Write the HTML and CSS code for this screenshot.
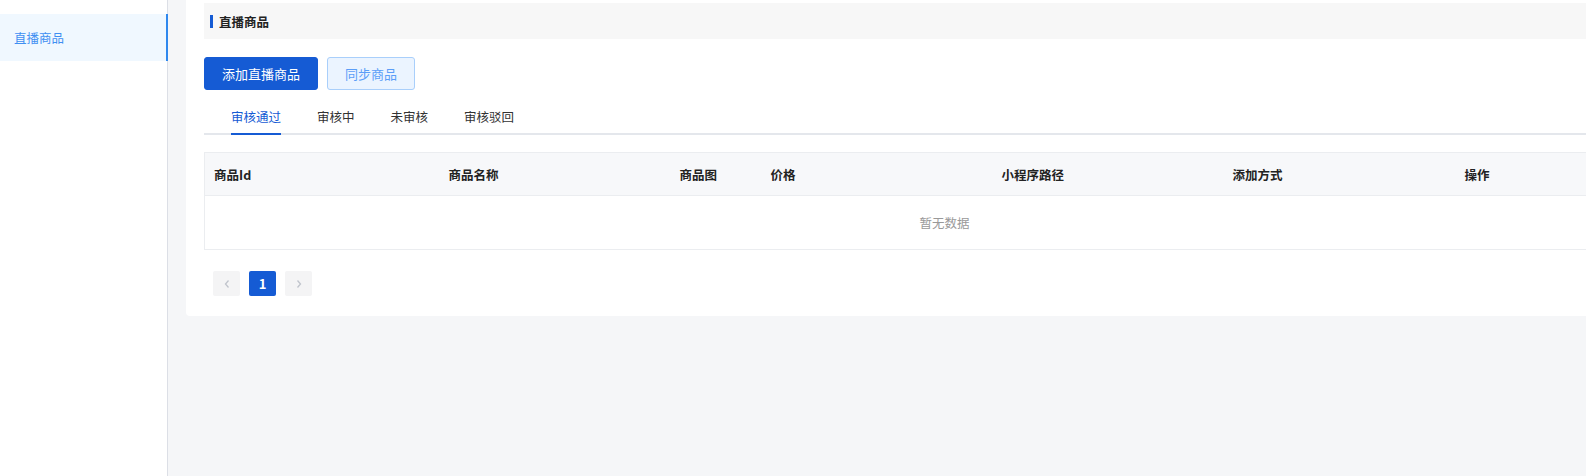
FILE: index.html
```html
<!DOCTYPE html>
<html lang="zh-CN">
  <head>
    <meta charset="UTF-8" />
    <meta name="viewport" content="width=device-width, initial-scale=1.0" />
    <title>直播商品</title>
    <link rel="stylesheet" href="styles.css">
  </head>
  <body>
    <div class="layout">
      <div class="sidebar">
        <ul class="menu">
          <li class="menu-item active">直播商品</li>
        </ul>
      </div>

      <div class="main">
        <div class="card">
          <div class="card-title">
            <span class="title-mark"></span>
            <span>直播商品</span>
          </div>

          <div class="toolbar">
            <button class="btn btn-primary">添加直播商品</button>
            <button class="btn btn-plain">同步商品</button>
          </div>

          <div class="tabs">
            <div class="tab active">审核通过</div>
            <div class="tab">审核中</div>
            <div class="tab">未审核</div>
            <div class="tab">审核驳回</div>
          </div>

          <table class="goods-table">
            <colgroup>
              <col style="width: 235px" />
              <col style="width: 231px" />
              <col style="width: 91px" />
              <col style="width: 231px" />
              <col style="width: 231px" />
              <col style="width: 232px" />
              <col style="width: 229px" />
            </colgroup>
            <thead>
              <tr>
                <th>商品Id</th>
                <th>商品名称</th>
                <th>商品图</th>
                <th>价格</th>
                <th>小程序路径</th>
                <th>添加方式</th>
                <th>操作</th>
              </tr>
            </thead>
            <tbody>
              <tr>
                <td class="empty" colspan="7">暂无数据</td>
              </tr>
            </tbody>
          </table>

          <div class="pager">
            <button class="page-btn page-arrow">
              <svg width="8" height="10" viewBox="0 0 8 10"><path d="M5.5 1.5 L2.5 5 L5.5 8.5" /></svg>
            </button>
            <button class="page-btn page-current">1</button>
            <button class="page-btn page-arrow">
              <svg width="8" height="10" viewBox="0 0 8 10"><path d="M2.5 1.5 L5.5 5 L2.5 8.5" /></svg>
            </button>
          </div>
        </div>
      </div>
    </div>
  </body>
</html>
```

FILE: styles.css
```css
* {
  box-sizing: border-box;
}

body {
  margin: 0;
  font-family: "Noto Sans CJK SC", "Noto Sans", sans-serif;
  font-size: 12.5px;
  color: #323233;
  background-color: #f5f6f8;
}

.layout {
  display: flex;
  height: 100vh;
  overflow: hidden;
}

.sidebar {
  flex: 0 0 168px;
  background-color: #fff;
  border-right: 1px solid #dcdfe6;
}

.menu {
  list-style: none;
  margin: 14px 0 0;
  padding: 0;
}

.menu-item {
  height: 47px;
  line-height: 47px;
  padding-left: 14px;
  margin-right: -1px;
}

.menu-item.active {
  background-color: #f0f8ff;
  color: #3f8ff2;
  border-right: 2px solid #2f88ee;
}

.main {
  flex: 1;
  overflow: hidden;
  padding: 0 0 0 18px;
}

.card {
  width: 1516px;
  background-color: #fff;
  border-radius: 0 0 4px 4px;
  padding: 3px 18px 20px;
}

.card-title {
  display: flex;
  align-items: center;
  height: 36px;
  padding-left: 6px;
  background-color: #f7f7f7;
  font-weight: bold;
  color: #222;
}

.title-mark {
  width: 3px;
  height: 13px;
  margin-right: 6px;
  background-color: #155bd4;
}

.toolbar {
  display: flex;
  gap: 9px;
  margin-top: 18px;
}

.btn {
  height: 33px;
  padding: 0 17px;
  border-radius: 3px;
  font-family: inherit;
  font-size: 13px;
  cursor: pointer;
}

.btn-primary {
  background-color: #155bd4;
  border: 1px solid #155bd4;
  color: #fff;
}

.btn-plain {
  background-color: #ebf4ff;
  border: 1px solid #a9cffb;
  color: #5b9ef8;
}

.tabs {
  display: flex;
  height: 45px;
  padding-left: 9px;
  border-bottom: 2px solid #e4e7ec;
}

.tab {
  position: relative;
  padding: 0 18px;
  line-height: 54px;
  color: #323233;
}

.tab.active {
  color: #155bd4;
}

.tab.active::after {
  content: "";
  position: absolute;
  left: 18px;
  right: 18px;
  bottom: -2px;
  height: 2px;
  background-color: #155bd4;
}

.goods-table {
  width: 1480px;
  margin-top: 17px;
  border-collapse: collapse;
  table-layout: fixed;
  border: 1px solid #ebedf0;
}

.goods-table th {
  height: 43px;
  padding: 0 9px;
  text-align: left;
  font-weight: bold;
  color: #222;
  background-color: #f7f8fa;
  border-bottom: 1px solid #ebedf0;
}

.goods-table td.empty {
  height: 54px;
  text-align: center;
  color: #999;
}

.pager {
  display: flex;
  gap: 9px;
  margin-top: 21px;
  padding-left: 9px;
}

.page-btn {
  display: flex;
  align-items: center;
  justify-content: center;
  width: 27px;
  height: 25px;
  padding: 0;
  border: none;
  border-radius: 2px;
  font-family: inherit;
  font-size: 13px;
}

.page-arrow {
  background-color: #f4f4f5;
}

.page-arrow path {
  fill: none;
  stroke: #c0c4cc;
  stroke-width: 1.3;
}

.page-current {
  background-color: #155bd4;
  color: #fff;
  font-weight: bold;
}
```
